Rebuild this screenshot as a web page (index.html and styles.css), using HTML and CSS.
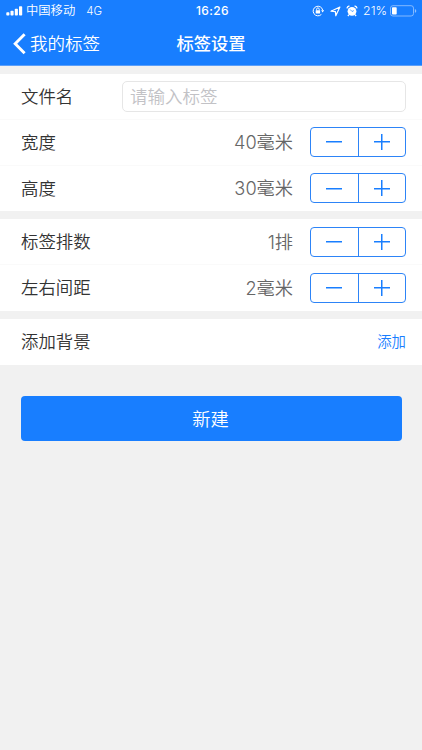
FILE: index.html
```html
<!DOCTYPE html>
<html lang="zh-CN">
<head>
    <meta charset="utf-8">
    <title>标签设置</title>
    <link rel="stylesheet" href="styles.css">
</head>
<body>
    <div class="header">
        <div class="status-bar">
            <div class="status-left">
                <svg class="signal" width="17" height="10" viewBox="0 0 17 10" fill="#fff">
                    <rect x="0.3" y="6.3" width="3.1" height="3.2" rx="0.8"/>
                    <rect x="4.5" y="4.8" width="3.1" height="4.7" rx="0.8"/>
                    <rect x="8.8" y="2.8" width="3.1" height="6.7" rx="0.8"/>
                    <rect x="13" y="0.3" width="3.2" height="9.2" rx="0.8"/>
                </svg>
                <span class="carrier">中国移动</span>
                <span class="network">4G</span>
            </div>
            <span class="clock">16:26</span>
            <div class="status-right">
                <svg class="lock" width="12" height="12" viewBox="0 0 12 12" fill="none" stroke="#fff">
                    <path d="M9.4 9.4A4.8 4.8 0 1 1 10.7 5.2" stroke-width="1"/>
                    <path d="M9.1 5.3h3l-1.5 2.1z" fill="#fff" stroke="none"/>
                    <rect x="3.7" y="5.2" width="4.4" height="3.3" rx="0.4" fill="#fff" stroke="none"/>
                    <path d="M4.6 5.4V4.2a1.3 1.3 0 0 1 2.6 0v1.2" stroke-width="0.9"/>
                </svg>
                <svg class="location" width="11" height="11" viewBox="0 0 11 11" fill="none" stroke="#fff" stroke-width="1.2" stroke-linejoin="round">
                    <path d="M1 5.2L9.9 1L5.8 9.8L5.4 5.6z"/>
                </svg>
                <svg class="alarm" width="12" height="12" viewBox="0 0 12 12">
                    <circle cx="6" cy="6.3" r="4.4" fill="#fff"/>
                    <path d="M0.9 3.4A3 3 0 0 1 3.4 1M11.1 3.4A3 3 0 0 0 8.6 1M3 9.6L1.9 11M9 9.6L10.1 11" fill="none" stroke="#fff" stroke-width="1.3"/>
                    <path d="M4.2 4.5L6 6.5L7.8 5.6" fill="none" stroke="#187eff" stroke-width="0.7"/>
                </svg>
                <span class="percent">21%</span>
                <svg class="battery" width="27" height="12" viewBox="0 0 27 12">
                    <rect x="0.5" y="0.7" width="23" height="10.3" rx="2.4" fill="none" stroke="#8fc0ff" stroke-width="0.9"/>
                    <rect x="2" y="2.2" width="4.7" height="7.3" rx="0.8" fill="#fff"/>
                    <path d="M24.9 4v3.8q1.4-.6 1.4-1.9T24.9 4z" fill="#8fc0ff"/>
                </svg>
            </div>
        </div>
        <div class="nav-bar">
            <a class="back">
                <svg width="13" height="22" viewBox="0 0 13 22" fill="none" stroke="#fff" stroke-width="2.9">
                    <path d="M11.6 1.3L2.2 10.8L11.6 20.3"/>
                </svg>
                <span>我的标签</span>
            </a>
            <h1>标签设置</h1>
        </div>
    </div>

    <div class="group">
        <div class="row">
            <label class="name" for="file-name">文件名</label>
            <input type="text" id="file-name" class="file-name" placeholder="请输入标签">
        </div>
        <div class="row">
            <span class="name">宽度</span>
            <span class="value">40毫米</span>
            <div class="stepper">
                <button class="minus"></button>
                <button class="plus"></button>
            </div>
        </div>
        <div class="row">
            <span class="name">高度</span>
            <span class="value">30毫米</span>
            <div class="stepper">
                <button class="minus"></button>
                <button class="plus"></button>
            </div>
        </div>
    </div>

    <div class="group">
        <div class="row">
            <span class="name">标签排数</span>
            <span class="value">1排</span>
            <div class="stepper">
                <button class="minus"></button>
                <button class="plus"></button>
            </div>
        </div>
        <div class="row">
            <span class="name">左右间距</span>
            <span class="value">2毫米</span>
            <div class="stepper">
                <button class="minus"></button>
                <button class="plus"></button>
            </div>
        </div>
    </div>

    <div class="group">
        <div class="row">
            <span class="name">添加背景</span>
            <a class="add">添加</a>
        </div>
    </div>

    <button class="create">新建</button>
</body>
</html>
```

FILE: styles.css
```css
* {
    box-sizing: border-box;
}
body {
    margin: 0;
    background-color: #f1f1f1;
    font-family: Inter, "Noto Sans CJK SC", sans-serif;
    font-weight: 350;
    color: #333;
}
button, input {
    font-family: inherit;
    font-weight: inherit;
}
.header {
    height: 66px;
    background-color: #187eff;
    border-bottom: 1px solid #5b9ffa;
    color: white;
}
.status-bar {
    display: grid;
    grid-template-columns: 1fr auto 1fr;
    align-items: center;
    height: 22px;
    padding: 0 5px 0 6px;
    font-size: 12.3px;
    line-height: 22px;
}
.status-left, .status-right {
    display: flex;
    align-items: center;
}
.status-right {
    justify-content: flex-end;
}
.signal {
    margin-right: 3px;
}
.network {
    margin-left: 11px;
    font-size: 11.5px;
}
.clock {
    padding-left: 2px;
    font-size: 12px;
    font-weight: 500;
    letter-spacing: 0.4px;
}
.location {
    margin-left: 6px;
}
.alarm {
    margin-left: 5px;
}
.percent {
    margin-left: 5px;
    margin-right: 3px;
    font-size: 12.3px;
}
.nav-bar {
    display: grid;
    grid-template-columns: 1fr auto 1fr;
    align-items: center;
    height: 43px;
    padding: 0 13px;
    line-height: 43px;
}
.nav-bar h1 {
    margin: 0;
    font-size: 17.3px;
    font-weight: 500;
}
.back {
    display: flex;
    align-items: center;
    gap: 4px;
    font-size: 17.5px;
}
.group {
    margin-top: 8px;
    background-color: white;
}
.row {
    display: flex;
    align-items: center;
    height: 45.75px;
    padding: 0 16px 0 21px;
    border-bottom: 1px solid #fafafa;
}
.row:last-child {
    border-bottom: none;
}
.name {
    flex: 1;
    padding-top: 1px;
    font-size: 17.4px;
    line-height: 24px;
}
.value {
    margin-right: 17px;
    font-size: 18.2px;
    line-height: 24px;
    color: #666;
}
.file-name {
    width: 284px;
    height: 31px;
    padding: 0 7px;
    border: 1px solid #e6e6e6;
    border-radius: 5px;
    background-color: white;
    font-size: 17.5px;
    outline: none;
}
.file-name::placeholder {
    color: #c2c2c6;
}
.stepper {
    display: flex;
    width: 96px;
    height: 30px;
    border: 1px solid #2d84f7;
    border-radius: 4px;
}
.stepper button {
    flex: 1;
    padding: 0;
    border: none;
    background: linear-gradient(#187eff, #187eff) center / 16px 1.5px no-repeat;
}
.stepper .plus {
    border-left: 1px solid #2d84f7;
    background: linear-gradient(#187eff, #187eff) center / 16px 1.5px no-repeat,
        linear-gradient(#187eff, #187eff) center / 1.5px 16px no-repeat;
}
.add {
    padding-top: 1px;
    font-size: 14.4px;
    line-height: 20px;
    color: #187eff;
}
.create {
    display: block;
    width: 381px;
    height: 45px;
    margin: 31px 0 0 20.5px;
    padding: 0 1px 0 0;
    border: none;
    border-radius: 4px;
    background-color: #187eff;
    color: white;
    font-size: 18.3px;
}
```
